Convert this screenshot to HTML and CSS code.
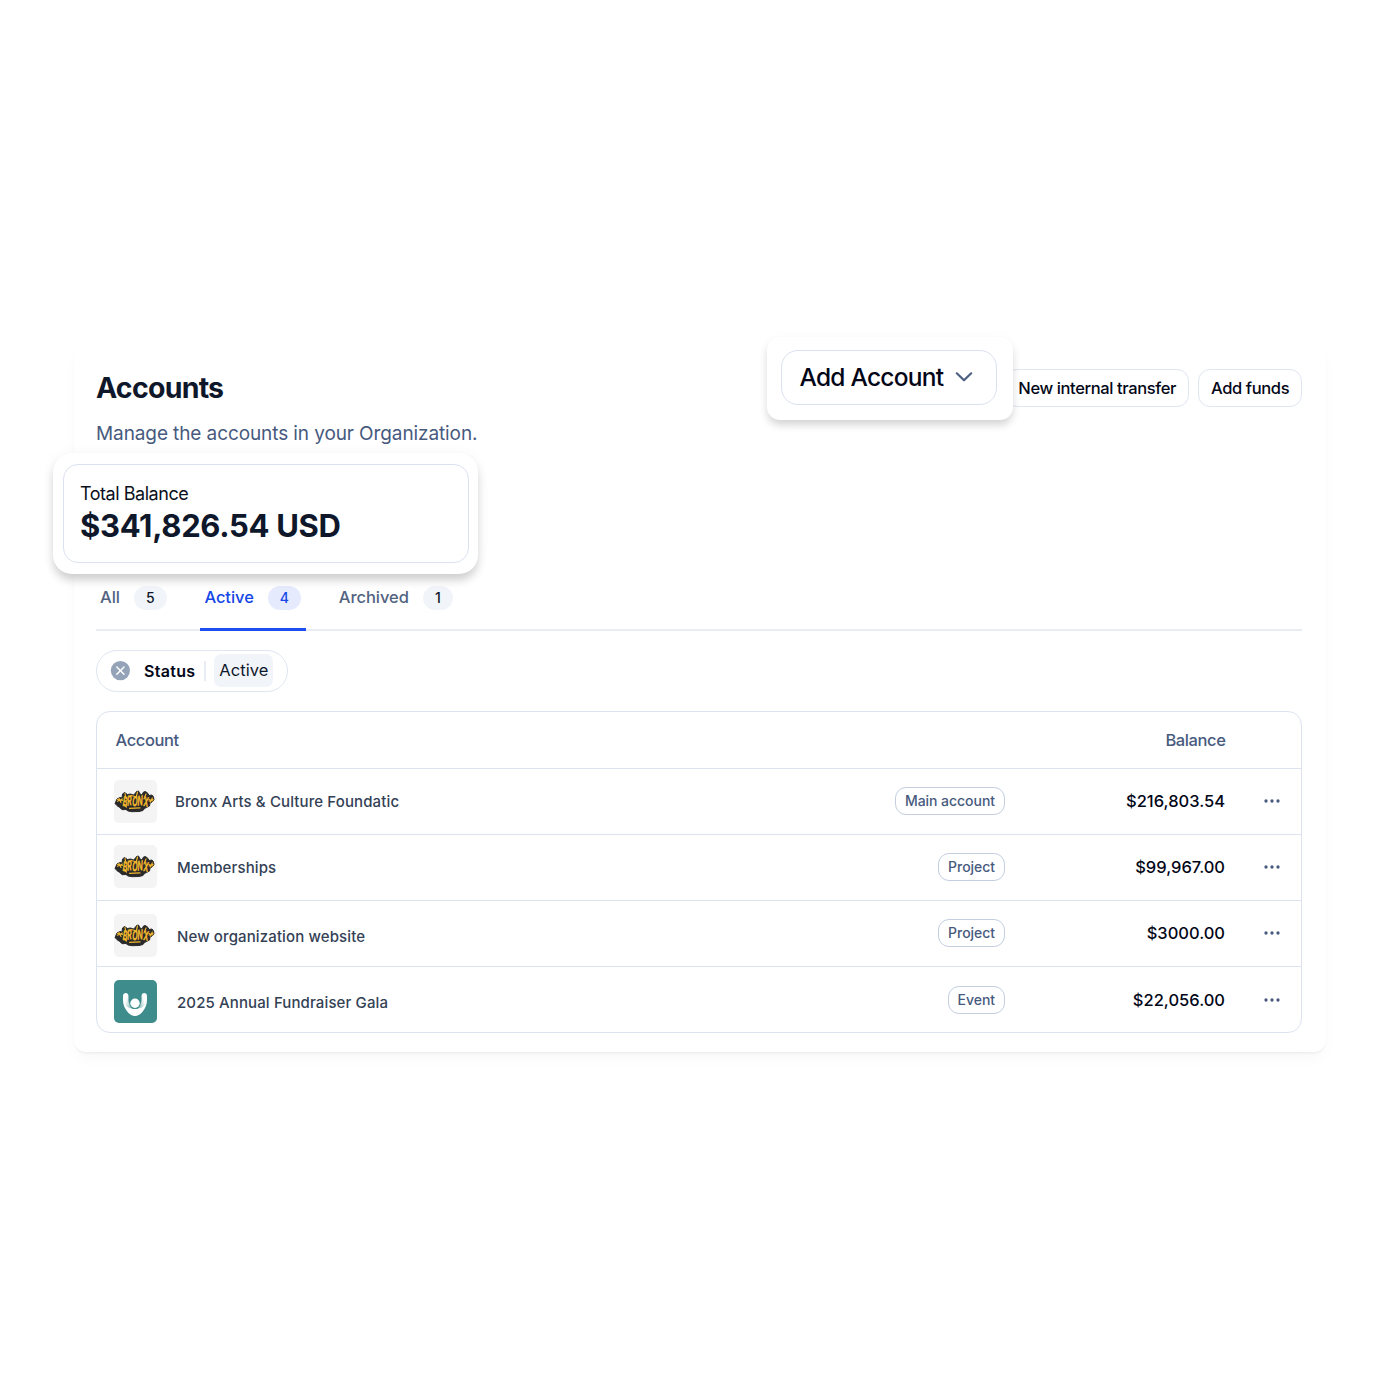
FILE: index.html
```
<!DOCTYPE html>
<html lang="en">
<head>
<meta charset="utf-8">
<title>Accounts</title>
<link rel="stylesheet" href="styles.css">
</head>
<body>
<svg width="0" height="0" class="defs" aria-hidden="true">
  <defs>
    <symbol id="bronx" viewBox="0 0 43 43">
      <path d="M3 19l3-1.500 2 .5.5-4 2-1.500 3 2 3-.5 3 1 2-2 1-1.500 2-.5 1.500 3 2 1 1.500-3 2-.5 2.500 2 1 2 3-.5 1.500 2 .5 3-2 2-2 1-.5 3-3 1.500-2 1-1.500 2-4 1-7 .2-4-.7-2-1.500-4 .2-2.500-2.500-2-1-1-1.500-1.500-1z" fill="#2b2a2b" stroke="#2b2a2b" stroke-width="1" stroke-linejoin="round"/>
      <text x="8.500" y="26" textLength="26" lengthAdjust="spacingAndGlyphs" rotate="6 -5 4 -4 8" class="graffiti">BRONX</text>
      <path d="M3.500 21.200l5-2.200M5 18.500l2 4M3.500 19.500l5 1M35 19.500l4 1.500M38.300 18l-2 4M35 21l4-1.500M11 13.500l1 5M17 15.500l6 1.500M23.500 12l-1 4M32 14l-2 5M10 24.500l2.500 2.500M15.500 28.300l10.500-.4" fill="none" stroke="#f1b62c" stroke-width="1.200" stroke-linecap="round"/>
    </symbol>
    <symbol id="dots" viewBox="0 0 16 4">
      <circle cx="2" cy="2" r="1.65"/><circle cx="8" cy="2" r="1.65"/><circle cx="14" cy="2" r="1.65"/>
    </symbol>
    <linearGradient id="armL" x1="0" y1="0" x2="1" y2=".6"><stop offset=".3" stop-color="#fff"/><stop offset="1" stop-color="#fff" stop-opacity=".15"/></linearGradient>
    <linearGradient id="armR" x1="1" y1="0" x2="0" y2=".6"><stop offset=".3" stop-color="#fff"/><stop offset="1" stop-color="#fff" stop-opacity=".15"/></linearGradient>
  </defs>
</svg>

<main class="panel">
  <header class="head">
    <div>
      <h1>Accounts</h1>
      <p class="subtitle">Manage the accounts in your Organization.</p>
    </div>
    <div class="actions">
      <button class="btn">New internal transfer</button>
      <button class="btn">Add funds</button>
    </div>
  </header>

  <nav class="tabs">
    <a class="tab">All <span class="count">5</span></a>
    <a class="tab active">Active <span class="count">4</span></a>
    <a class="tab">Archived <span class="count narrow">1</span></a>
  </nav>

  <div class="filter">
    <svg width="20" height="20" viewBox="0 0 20 20"><circle cx="10.400" cy="9.600" r="9.600" fill="#94a3b8"/><path d="M6.800 6l7.200 7.200M14 6l-7.200 7.200" stroke="#fff" stroke-width="1.500" stroke-linecap="round"/></svg>
    <span class="filter-name">Status</span>
    <span class="filter-value">Active</span>
  </div>

  <section class="table">
    <div class="thead"><span>Account</span><span>Balance</span></div>
    <div class="row">
      <div class="who first"><svg class="logo"><use href="#bronx"/></svg><span>Bronx Arts &amp; Culture Foundatic</span></div>
      <span class="badge">Main account</span><span class="amount">$216,803.54</span><svg class="more"><use href="#dots"/></svg>
    </div>
    <div class="row">
      <div class="who second"><svg class="logo"><use href="#bronx"/></svg><span>Memberships</span></div>
      <span class="badge">Project</span><span class="amount">$99,967.00</span><svg class="more"><use href="#dots"/></svg>
    </div>
    <div class="row">
      <div class="who third"><svg class="logo"><use href="#bronx"/></svg><span>New organization website</span></div>
      <span class="badge">Project</span><span class="amount">$3000.00</span><svg class="more"><use href="#dots"/></svg>
    </div>
    <div class="row last">
      <div class="who fourth">
        <svg class="logo teal" viewBox="0 0 43 43">
          <path d="M9 16c0-4 5.500-4 5.500 0v4c0 4 3 6.500 6.500 6.500V36c-6 0-12-8-12-16z" fill="url(#armL)"/>
          <path d="M33 16c0-4-5.500-4-5.500 0v4c0 4-3 6.500-6.500 6.500V36c6 0 12-8 12-16z" fill="url(#armR)"/>
          <path d="M10 24c2 2.500 6 5 11 5s9-2.500 11-5c-2 7-6 12-11 12s-9-5-11-12z" fill="#fff"/>
          <circle cx="21" cy="23.500" r="5.600" fill="#3e8d8c"/>
          <circle cx="21" cy="23.300" r="4.700" fill="#fff"/>
        </svg>
        <span>2025 Annual Fundraiser Gala</span>
      </div>
      <span class="badge">Event</span><span class="amount">$22,056.00</span><svg class="more"><use href="#dots"/></svg>
    </div>
  </section>

  <div class="float add">
    <button class="add-btn">Add Account
      <svg width="18" height="10" viewBox="0 0 18 10"><path d="M1.800 1.300L9 8.300l7.200-7" fill="none" stroke="#4a5f82" stroke-width="2.200" stroke-linecap="round" stroke-linejoin="round"/></svg>
    </button>
  </div>
  <div class="float total">
    <div class="total-box">
      <div class="total-label">Total Balance</div>
      <div class="total-value">$341,826.54 USD</div>
    </div>
  </div>
</main>
</body>
</html>
```
FILE: styles.css
```
* { box-sizing: border-box; margin: 0; }
body {
  height: 1400px;
  padding: 345px 74px 0;
  background: #fff;
  color: #020617;
  font-family: Inter, sans-serif;
  font-size: 16px;
  font-weight: 500;
}
.defs { position: absolute; }
button { font: inherit; color: inherit; background: #fff; white-space: nowrap; }

.panel {
  position: relative;
  height: 707px;
  padding: 24px 24px 0 22px;
  border-radius: 12px;
  background: #fff;
  box-shadow: 0 2px 3px -1px rgba(0, 0, 0, .07), 0 9px 16px -3px rgba(0, 0, 0, .03);
}
.head { display: flex; justify-content: space-between; height: 209px; }
h1 { font-size: 28.500px; line-height: 38px; font-weight: 700; letter-spacing: -.75px; color: #0f172a; }
.subtitle { margin-top: 15px; font-size: 19px; line-height: 24px; font-weight: 400; letter-spacing: -.1px; color: #475a7e; }
.actions { display: flex; align-items: flex-start; gap: 9px; }
.btn {
  height: 38px;
  padding: 0 12px;
  border: 1px solid #dfe5f1;
  border-radius: 12px;
  font-size: 16.500px;
  letter-spacing: -.38px;
}
.btn:last-child { width: 104px; }

.tabs { display: flex; gap: 28.500px; height: 53px; border-bottom: 2px solid #e9edf3; }
.tab {
  display: flex;
  align-items: flex-start;
  gap: 14px;
  height: 53px;
  padding: 8px 5px 0 4.500px;
  font-size: 16.500px;
  line-height: 23px;
  letter-spacing: -.05px;
  color: #526380;
}
.tab:first-child { margin-right: -.5px; padding-left: 4px; }
.tab.active { border-bottom: 3px solid #1d4ff0; color: #1447e6; }
.count {
  width: 33px;
  height: 24px;
  border-radius: 12px;
  background: #f1f4f9;
  font-size: 14px;
  line-height: 24px;
  text-align: center;
  color: #0f172a;
}
.count.narrow { width: 30px; }
.active .count { background: #e6eafd; color: #1447e6; }

.filter {
  display: flex;
  align-items: center;
  width: 192px;
  height: 42px;
  margin-top: 19px;
  padding: 0 0 1px 13px;
  border: 1px solid #dfe5f1;
  border-radius: 21px;
}
.filter-name {
  margin-left: 14px;
  padding-right: 9px;
  border-right: 2px solid #e8ecf3;
  line-height: 20px;
  font-weight: 600;
  letter-spacing: .3px;
}
.filter-value {
  margin-left: 8px;
  padding: 0 5px;
  border-radius: 7px;
  background: #f1f4f9;
  font-size: 16.500px;
  line-height: 33px;
  font-weight: 400;
  letter-spacing: .05px;
  color: #0f172a;
}

.table { margin-top: 19px; border: 1px solid #dce3ef; border-radius: 14px; }
.thead {
  display: flex;
  justify-content: space-between;
  height: 56px;
  padding: 0 75.500px 0 18.500px;
  font-size: 16.500px;
  line-height: 56px;
  letter-spacing: -.4px;
  color: #475a7e;
}
.row {
  display: grid;
  grid-template-columns: 1fr auto 220px 55px;
  align-items: center;
  height: 66px;
  padding: 0 21px 2px 17px;
  border-top: 1px solid #dce3ef;
}
.row.last { padding-bottom: 0; }
.who {
  display: flex;
  align-items: center;
  align-self: start;
  gap: 20px;
  font-size: 15px;
  letter-spacing: .12px;
  color: #334155;
}
.who span { padding-top: 1px; }
.who.first { margin-top: 11px; gap: 18px; }
.who.first span { padding-top: 0; }
.who.second { margin-top: 10px; }
.who.third { margin-top: 13px; }
.who.third span { padding-top: 2px; }
.who.fourth { margin-top: 13px; }
.logo { width: 43px; height: 43px; border-radius: 5px; background: #f4f4f4; }
.logo.teal { background: #3e8d8c; }
.graffiti { font: italic 800 14px Inter, sans-serif; fill: #f1b62c; }
.badge {
  height: 28px;
  padding: 0 9px;
  border: 1px solid #c3cfe0;
  border-radius: 11px;
  font-size: 14px;
  line-height: 26px;
  letter-spacing: -.04px;
  color: #475a7e;
}
.amount { text-align: right; font-size: 16.500px; }
.more { justify-self: end; width: 16px; height: 4px; fill: #475a7e; }

.float { position: absolute; background: #fff; }
.add {
  top: -8px;
  left: 693px;
  padding: 13px 16px 15px 14px;
  border-radius: 13px;
  box-shadow: 0 6px 8px -1px rgba(0, 0, 0, .15), 0 2px 12px rgba(0, 0, 0, .04);
}
.add-btn {
  display: flex;
  align-items: center;
  gap: 11.500px;
  width: 216px;
  height: 55px;
  padding: 0 17px 2px 17.500px;
  border: 1.500px solid #dbe1ef;
  border-radius: 17px;
  font-size: 24.500px;
  letter-spacing: -.75px;
}
.total {
  top: 108px;
  left: -21px;
  width: 425px;
  padding: 11px 9px 11px 10px;
  border-radius: 19px;
  box-shadow: 0 7px 10px -1px rgba(0, 0, 0, .17), 0 2px 14px rgba(0, 0, 0, .05);
}
.total-box { height: 99px; padding: 16px; border: 1px solid #dbe1ef; border-radius: 15px; }
.total-label { font-size: 18px; line-height: 25px; font-weight: 400; letter-spacing: -.46px; color: #0b1020; }
.total-value { font-size: 31px; line-height: 39px; font-weight: 700; letter-spacing: -.33px; color: #0f172a; }
```
